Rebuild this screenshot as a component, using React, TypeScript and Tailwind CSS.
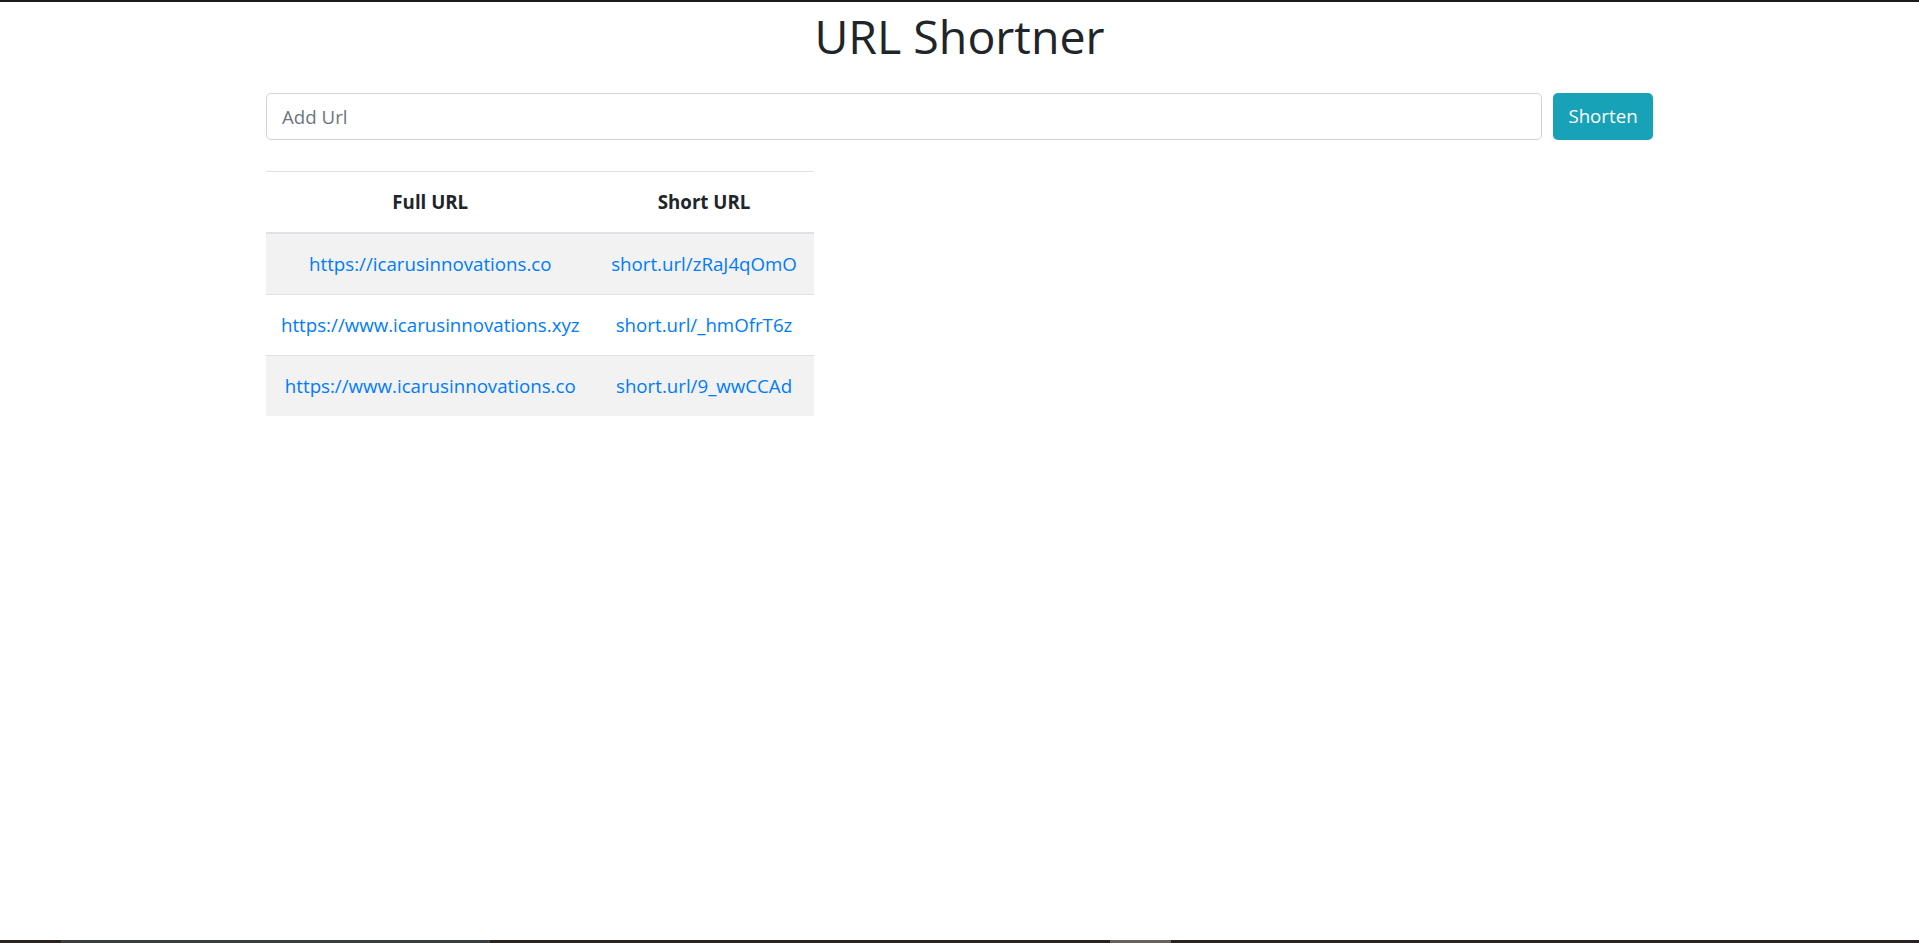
import React from "react";

const rows = [
  { full: "https://icarusinnovations.co", short: "short.url/zRaJ4qOmO" },
  { full: "https://www.icarusinnovations.xyz", short: "short.url/_hmOfrT6z" },
  { full: "https://www.icarusinnovations.co", short: "short.url/9_wwCCAd" },
];

export default function App() {
  return (
    <div
      className="h-[943px] flex flex-col bg-white text-[#212529]"
      style={{ fontFamily: '"Segoe UI", "Open Sans", "Noto Sans", sans-serif' }}
    >
      <div className="h-[2px] bg-[#1c1c1c]" />
      <main className="flex-1">
        <div className="w-[1425px] mx-auto px-[19px]">
          <h1 className="text-center text-[46.5px] leading-[60px] font-normal mt-[4px] mb-[27px]">
            URL Shortner
          </h1>
          <div className="flex items-center gap-[11px]">
            <input
              type="text"
              placeholder="Add Url"
              className="flex-1 h-[47px] rounded-[5px] border border-[#ced4da] px-[15px] text-[18.7px] text-[#495057] placeholder:text-[#6c757d] outline-none"
            />
            <button className="h-[47px] w-[100px] rounded-[5px] bg-[#17a2b8] text-white text-[18.7px]">
              Shorten
            </button>
          </div>
          <table className="mt-[31px] border-collapse text-[18.7px] leading-[30px]">
            <thead>
              <tr>
                <th className="w-[328px] px-[15px] py-[15px] border-t border-b-2 border-[#dee2e6] font-bold text-center">
                  Full URL
                </th>
                <th className="w-[219px] px-[15px] py-[15px] border-t border-b-2 border-[#dee2e6] font-bold text-center">
                  Short URL
                </th>
              </tr>
            </thead>
            <tbody>
              {rows.map((r, i) => (
                <tr key={i} className={i % 2 === 0 ? "bg-[#f2f2f2]" : "bg-white"}>
                  <td className="px-[15px] py-[15px] border-t border-[#dee2e6] text-center whitespace-nowrap">
                    <a href="#" className="text-[#007bff]">{r.full}</a>
                  </td>
                  <td className="px-[15px] py-[15px] border-t border-[#dee2e6] text-center whitespace-nowrap">
                    <a href="#" className="text-[#007bff]">{r.short}</a>
                  </td>
                </tr>
              ))}
            </tbody>
          </table>
        </div>
      </main>
      <div className="h-[3px] bg-[#2b221f] flex">
        <div className="w-[61px]" />
        <div className="w-[429px] bg-[#3b3e42]" />
        <div className="w-[620px]" />
        <div className="w-[61px] bg-[#6b5f59]" />
      </div>
    </div>
  );
}
